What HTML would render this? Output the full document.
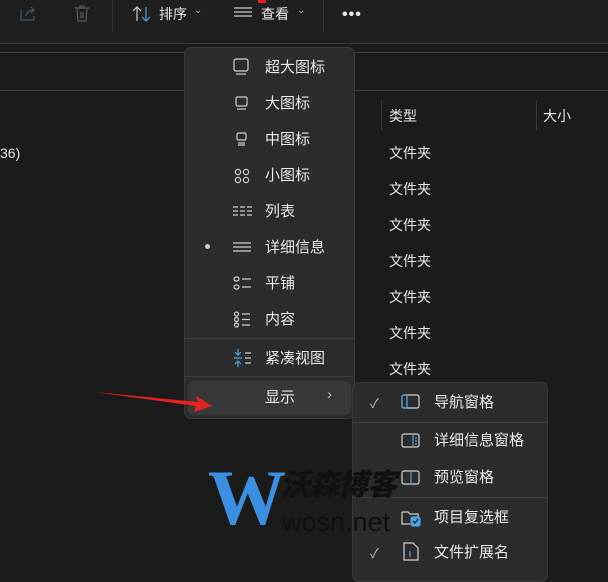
<!DOCTYPE html>
<html><head><meta charset="utf-8"><style>
*{margin:0;padding:0;box-sizing:border-box}
body{width:608px;height:577px;overflow:hidden;background:#1b1b1b;position:relative;font-family:"Liberation Sans","Noto Sans CJK SC",sans-serif;color:#e8e8e8}
.a{position:absolute}
.t{font-size:15px;white-space:nowrap;line-height:20px}
.ic{position:absolute;stroke:#cfcfcf;fill:none;stroke-width:1.2}
</style></head><body>
<div class="a" style="left:0;top:0;width:608px;height:43px;background:#1f1f1f"></div>
<div class="a" style="left:0;top:43px;width:608px;height:1px;background:#3a3a3a"></div>
<div class="a" style="left:0;top:52px;width:608px;height:1px;background:#3a3a3a"></div>
<div class="a" style="left:0;top:90px;width:608px;height:1px;background:#3a3a3a"></div>
<div class="a" style="left:112px;top:0;width:1px;height:32px;background:#333"></div>
<div class="a" style="left:323px;top:0;width:1px;height:32px;background:#333"></div>
<svg class="ic" style="left:18px;top:4px;stroke:#3e5a6e" width="20" height="20"><path d="M3 6v10h13v-4M8 12c1-4 4-6 8-6M13 3l3 3-3 3"/></svg>
<svg class="ic" style="left:72px;top:4px;stroke:#5a5a5a" width="20" height="20"><path d="M3 4h14M8 4V2h4v2M5 4l1 13h8l1-13M9 8v6M11 8v6"/></svg>
<svg class="ic" style="left:132px;top:5px" width="20" height="18"><path d="M5 16V2M1 6l4-4 4 4" /><path d="M14 2v14M10 12l4 4 4-4" style="stroke:#4aa3df"/></svg>
<div class="a t" style="left:159px;top:4px;font-size:14px">排序</div>
<div class="a" style="left:194px;top:5px;font-size:10px;color:#aaa">⌄</div>
<svg class="ic" style="left:234px;top:6px" width="20" height="14"><path d="M0 2h18M0 6h18M0 10h18"/></svg>
<div class="a t" style="left:261px;top:4px;font-size:14px">查看</div>
<div class="a" style="left:297px;top:5px;font-size:10px;color:#aaa">⌄</div>
<div class="a" style="left:258px;top:0;width:8px;height:3px;background:#e02020"></div>
<div class="a" style="left:342px;top:6px;font-size:16px;letter-spacing:1px;font-weight:bold">•••</div>
<div class="a" style="left:381px;top:100px;width:1px;height:30px;background:#3a3a3a"></div>
<div class="a" style="left:536px;top:100px;width:1px;height:30px;background:#3a3a3a"></div>
<div class="a t" style="left:389px;top:106px;font-size:14px">类型</div>
<div class="a t" style="left:543px;top:106px;font-size:14px">大小</div>
<div class="a t" style="left:0;top:143px;font-size:14px">36)</div>
<div class="a t" style="left:389px;top:143px;font-size:14px">文件夹</div>
<div class="a t" style="left:389px;top:179px;font-size:14px">文件夹</div>
<div class="a t" style="left:389px;top:215px;font-size:14px">文件夹</div>
<div class="a t" style="left:389px;top:251px;font-size:14px">文件夹</div>
<div class="a t" style="left:389px;top:287px;font-size:14px">文件夹</div>
<div class="a t" style="left:389px;top:323px;font-size:14px">文件夹</div>
<div class="a t" style="left:389px;top:359px;font-size:14px">文件夹</div>
<div class="a" style="left:184px;top:47px;width:171px;height:372px;background:#2c2c2c;border-radius:7px;border:1px solid #3a3a3a"></div>
<div class="a t" style="left:265px;top:58px">超大图标</div>
<div class="a t" style="left:265px;top:94px">大图标</div>
<div class="a t" style="left:265px;top:130px">中图标</div>
<div class="a t" style="left:265px;top:166px">小图标</div>
<div class="a t" style="left:265px;top:202px">列表</div>
<div class="a t" style="left:265px;top:238px">详细信息</div>
<div class="a t" style="left:265px;top:274px">平铺</div>
<div class="a t" style="left:265px;top:310px">内容</div>
<div class="a t" style="left:265px;top:349px">紧凑视图</div>
<svg class="ic" style="left:233px;top:58px" width="18" height="20"><rect x="1" y="1" width="14" height="12" rx="2"/><path d="M3 16h10"/></svg>
<svg class="ic" style="left:235px;top:96px" width="16" height="16"><rect x="1" y="1" width="11" height="9" rx="1.5"/><path d="M2 13h9"/></svg>
<svg class="ic" style="left:236px;top:132px" width="16" height="16"><rect x="1" y="1" width="9" height="7" rx="1.5"/><path d="M2 11h7M2 13h7"/></svg>
<svg class="ic" style="left:234px;top:168px" width="18" height="18"><circle cx="4" cy="4" r="2.6"/><circle cx="12" cy="4" r="2.6"/><circle cx="4" cy="12" r="2.6"/><circle cx="12" cy="12" r="2.6"/></svg>
<svg class="ic" style="left:233px;top:205px" width="20" height="14"><path d="M0 2h5M0 6h5M0 10h5M7 2h5M7 6h5M7 10h5M14 2h5M14 6h5M14 10h5"/></svg>
<svg class="ic" style="left:233px;top:241px" width="20" height="14"><path d="M0 2h18M0 6h18M0 10h18"/></svg>
<div class="a" style="left:205px;top:244px;width:5px;height:5px;border-radius:50%;background:#ccc"></div>
<svg class="ic" style="left:233px;top:276px" width="20" height="16"><rect x="1" y="1" width="5" height="4" rx="2"/><rect x="1" y="9" width="5" height="4" rx="2"/><path d="M9 3h9M9 11h9"/></svg>
<svg class="ic" style="left:233px;top:311px" width="20" height="18"><circle cx="3.5" cy="3" r="2"/><circle cx="3.5" cy="8.5" r="2"/><circle cx="3.5" cy="14" r="2"/><path d="M9 3h8M9 8.5h8M9 14h8"/></svg>
<svg class="ic" style="left:233px;top:349px" width="20" height="20"><path d="M5 0v6M2 3l3 3 3-3M5 18v-6M2 15l3-3 3 3M1 9h8" style="stroke:#4aa3df"/><path d="M12 4h6M12 9h6M12 14h6"/></svg>
<div class="a" style="left:185px;top:338px;width:169px;height:1px;background:#3d3d3d"></div>
<div class="a" style="left:185px;top:376px;width:169px;height:1px;background:#3d3d3d"></div>
<div class="a" style="left:188px;top:381px;width:163px;height:34px;background:#383838;border-radius:5px"></div>
<div class="a t" style="left:265px;top:388px">显示</div>
<div class="a" style="left:327px;top:386px;font-size:15px;color:#bbb">›</div>
<div class="a" style="left:352px;top:382px;width:196px;height:200px;background:#2c2c2c;border-radius:7px;border:1px solid #3a3a3a"></div>
<div class="a" style="left:353px;top:422px;width:194px;height:1px;background:#3d3d3d"></div>
<div class="a" style="left:353px;top:497px;width:194px;height:1px;background:#3d3d3d"></div>
<div class="a" style="left:370px;top:393px;font-size:13px;color:#bbb">✓</div>
<div class="a" style="left:370px;top:543px;font-size:13px;color:#bbb">✓</div>
<svg class="ic" style="left:401px;top:394px" width="20" height="16"><rect x="1" y="1" width="17" height="13" rx="2"/><path d="M6 1v13" style="stroke:#4aa3df"/><rect x="1" y="1" width="5" height="13" rx="1.5" style="stroke:#4aa3df"/></svg>
<svg class="ic" style="left:401px;top:433px" width="20" height="16"><rect x="1" y="1" width="17" height="13" rx="2"/><path d="M12 1v13M14 5h2M14 8h2M14 11h2" style="stroke:#4aa3df"/></svg>
<svg class="ic" style="left:401px;top:470px" width="20" height="16"><rect x="1" y="1" width="17" height="13" rx="2"/><path d="M10 1v13" style="stroke:#4aa3df"/></svg>
<svg class="ic" style="left:401px;top:508px" width="22" height="20"><path d="M1 4v12h8M1 4h6l2 2h8v4"/><rect x="10" y="9" width="9" height="9" rx="2" style="fill:#4aa3df;stroke:#4aa3df"/><path d="M12 13l2 2 3-4" style="stroke:#111"/></svg>
<svg class="ic" style="left:403px;top:542px" width="18" height="20"><path d="M1 1h9l5 5v12H1z"/><path d="M7 9v6" style="stroke:#4aa3df"/></svg>
<div class="a t" style="left:434px;top:393px">导航窗格</div>
<div class="a t" style="left:434px;top:431px">详细信息窗格</div>
<div class="a t" style="left:434px;top:468px">预览窗格</div>
<div class="a t" style="left:434px;top:508px">项目复选框</div>
<div class="a t" style="left:434px;top:543px">文件扩展名</div>
<div class="a" style="left:208px;top:462px;font-family:'Liberation Serif',serif;font-size:78px;font-weight:bold;color:#3b8fe0;line-height:72px">W</div>
<div class="a" style="left:280px;top:470px;font-size:30px;font-weight:900;font-style:italic;color:#111;line-height:32px;letter-spacing:-1px">沃森博客</div>
<div class="a" style="left:282px;top:507px;font-size:27px;color:#111;line-height:30px">wosn.net</div>
<svg class="a" style="left:90px;top:385px" width="125" height="30"><path d="M4 7L108 17L106 11L122 21L104 27L106 21Z" fill="#e82020"/></svg>
</body></html>
